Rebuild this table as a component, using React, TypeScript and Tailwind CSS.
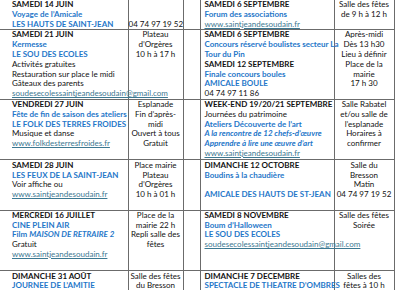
import React from "react";

const H = ({ children }: { children?: React.ReactNode }) => (
  <div className="font-bold text-[#111]">{children}</div>
);
const B = ({ children }: { children?: React.ReactNode }) => (
  <div className="font-bold text-[#1f77c9]">{children}</div>
);
const BI = ({ children }: { children?: React.ReactNode }) => (
  <div className="font-bold italic text-[#1f77c9]">{children}</div>
);
const N = ({ children }: { children?: React.ReactNode }) => (
  <div className="text-[#111]">{children}</div>
);
const L = ({ children }: { children?: React.ReactNode }) => (
  <div className="text-[#3c7891] underline decoration-[#3c7891] underline-offset-[1px]">{children}</div>
);
const E = () => <div>&nbsp;</div>;

const Desc = ({ children, first }: { children: React.ReactNode; first?: boolean }) => (
  <td className={`border border-[#6b6b6b] align-top whitespace-nowrap ${first ? "border-l-0 pl-[12px] pr-[2px]" : "pl-[4px] pr-[2px]"}`}>
    {children}
  </td>
);
const Loc = ({ children }: { children?: React.ReactNode }) => (
  <td className="border border-[#6b6b6b] align-top text-center whitespace-nowrap text-[#111] px-0">
    {children}
  </td>
);
const Gap = () => <td className="border border-[#6b6b6b]"></td>;

export default function App() {
  return (
    <div className="w-[400px] h-[290px] overflow-hidden bg-white">
      <div
        className="text-[8px] leading-[9.8px]"
        style={{ fontFamily: "Lato, 'Liberation Sans', sans-serif" }}
      >
        <table className="border-collapse table-fixed w-[394px] [&_tr:first-child_td]:border-t-0">
          <colgroup>
            <col className="w-[128px]" />
            <col className="w-[55px]" />
            <col className="w-[17px]" />
            <col className="w-[134px]" />
            <col className="w-[60px]" />
          </colgroup>
          <tbody>
            <tr>
              <Desc first>
                <H>SAMEDI 14 JUIN</H>
                <B>Voyage de l’Amicale</B>
                <B>LES HAUTS DE SAINT-JEAN</B>
              </Desc>
              <Loc>
                <E />
                <E />
                <div>04 74 97 19 52</div>
              </Loc>
              <Gap />
              <Desc>
                <H>SAMEDI 6 SEPTEMBRE</H>
                <B>Forum des associations</B>
                <L>www.saintjeandesoudain.fr</L>
              </Desc>
              <Loc>
                <div>Salle des fêtes</div>
                <div>de 9 h à 12 h</div>
              </Loc>
            </tr>
            <tr>
              <Desc first>
                <H>SAMEDI 21 JUIN</H>
                <B>Kermesse</B>
                <B>LE SOU DES ECOLES</B>
                <N>Activités gratuites</N>
                <N>Restauration sur place le midi</N>
                <N>Gâteaux des parents</N>
                <L>soudesecolessaintjeandesoudain@gmail.com</L>
              </Desc>
              <Loc>
                <div>Plateau</div>
                <div>d’Orgères</div>
                <div>10 h à 17 h</div>
              </Loc>
              <Gap />
              <Desc>
                <H>SAMEDI 6 SEPTEMBRE</H>
                <B>Concours réservé boulistes secteur La</B>
                <B>Tour du Pin</B>
                <H>SAMEDI 12 SEPTEMBRE</H>
                <B>Finale concours boules</B>
                <B>AMICALE BOULE</B>
                <N>04 74 97 11 86</N>
              </Desc>
              <Loc>
                <div>Après-midi</div>
                <div>Dès 13 h30</div>
                <div>Lieu à définir</div>
                <div>Place de la</div>
                <div>mairie</div>
                <div>17 h 30</div>
              </Loc>
            </tr>
            <tr>
              <Desc first>
                <H>VENDREDI 27 JUIN</H>
                <B>Fête de fin de saison des ateliers</B>
                <B>LE FOLK DES TERRES FROIDES</B>
                <N>Musique et danse</N>
                <L>www.folkdesterresfroides.fr</L>
              </Desc>
              <Loc>
                <div>Esplanade</div>
                <div>Fin d’après-</div>
                <div>midi</div>
                <div>Ouvert à tous</div>
                <div>Gratuit</div>
              </Loc>
              <Gap />
              <Desc>
                <H>WEEK-END 19/20/21 SEPTEMBRE</H>
                <N>Journées du patrimoine</N>
                <B>Ateliers Découverte de l’art</B>
                <BI>A la rencontre de 12 chefs-d’œuvre</BI>
                <BI>Apprendre à lire une œuvre d’art</BI>
                <L>www.saintjeandesoudain.fr</L>
              </Desc>
              <Loc>
                <div>Salle Rabatel</div>
                <div>et/ou salle de</div>
                <div>l’esplanade</div>
                <div>Horaires à</div>
                <div>confirmer</div>
              </Loc>
            </tr>
            <tr>
              <Desc first>
                <div className="pt-[1px]">
                  <H>SAMEDI 28 JUIN</H>
                  <B>LES FEUX DE LA SAINT-JEAN</B>
                  <N>Voir affiche ou</N>
                  <L>www.saintjeandesoudain.fr</L>
                  <E />
                </div>
              </Desc>
              <Loc>
                <div className="pt-[1px]">
                  <div>Place mairie</div>
                  <div>Plateau</div>
                  <div>d’Orgères</div>
                  <div>10 h à 01 h</div>
                </div>
              </Loc>
              <Gap />
              <Desc>
                <div className="pt-[1px]">
                  <H>DIMANCHE 12 OCTOBRE</H>
                  <B>Boudins à la chaudière</B>
                  <E />
                  <B>AMICALE DES HAUTS DE ST-JEAN</B>
                </div>
              </Desc>
              <Loc>
                <div className="pt-[1px]">
                  <div>Salle du</div>
                  <div>Bresson</div>
                  <div>Matin</div>
                  <div>04 74 97 19 52</div>
                </div>
              </Loc>
            </tr>
            <tr>
              <Desc first>
                <H>MERCREDI 16 JUILLET</H>
                <B>CINE PLEIN AIR</B>
                <div className="font-bold text-[#1f77c9]">
                  Film <span className="italic">MAISON DE RETRAIRE 2</span>
                </div>
                <N>Gratuit</N>
                <L>www.saintjeandesoudain.fr</L>
                <E />
              </Desc>
              <Loc>
                <div>Place de la</div>
                <div>mairie 22 h</div>
                <div>Repli salle des</div>
                <div>fêtes</div>
              </Loc>
              <Gap />
              <Desc>
                <H>SAMEDI 8 NOVEMBRE</H>
                <B>Boum d’Halloween</B>
                <B>LE SOU DES ECOLES</B>
                <L>soudesecolessaintjeandesoudain@gmail.com</L>
              </Desc>
              <Loc>
                <div>Salle des fêtes</div>
                <div>Soirée</div>
              </Loc>
            </tr>
            <tr>
              <Desc first>
                <div className="pt-[1px]">
                  <H>DIMANCHE 31 AOÛT</H>
                  <B>JOURNEE DE L’AMITIE</B>
                  <E />
                  <E />
                </div>
              </Desc>
              <Loc>
                <div className="pt-[1px]">
                  <div>Salle des fêtes</div>
                  <div>du Bresson</div>
                </div>
              </Loc>
              <Gap />
              <Desc>
                <div className="pt-[1px]">
                  <H>DIMANCHE 7 DECEMBRE</H>
                  <B>SPECTACLE DE THEATRE D’OMBRES</B>
                </div>
              </Desc>
              <Loc>
                <div className="pt-[1px]">
                  <div>Salles des</div>
                  <div>fêtes à 10 h</div>
                </div>
              </Loc>
            </tr>
          </tbody>
        </table>
      </div>
    </div>
  );
}
